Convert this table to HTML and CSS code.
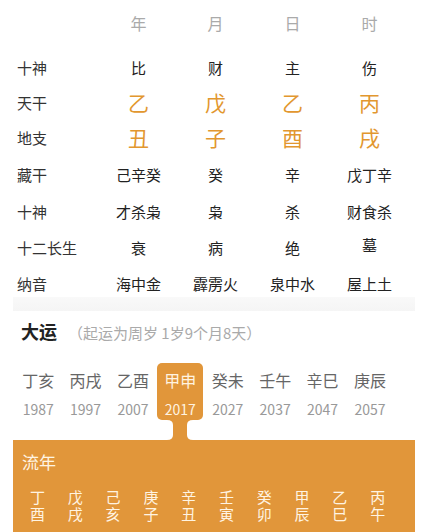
FILE: index.html
```html
<!DOCTYPE html>
<html lang="zh-CN">
<head>
<meta charset="utf-8">
<link rel="stylesheet" href="styles.css">
</head>
<body>
<div class="pillars">
  <div class="row head"><span class="lbl"></span><span>年</span><span>月</span><span>日</span><span>时</span></div>
  <div class="row"><span class="lbl">十神</span><span>比</span><span>财</span><span>主</span><span>伤</span></div>
  <div class="row big gan"><span class="lbl">天干</span><span>乙</span><span>戊</span><span>乙</span><span>丙</span></div>
  <div class="row big zhi"><span class="lbl">地支</span><span>丑</span><span>子</span><span>酉</span><span>戌</span></div>
  <div class="row cang"><span class="lbl">藏干</span><span>己辛癸</span><span>癸</span><span>辛</span><span>戊丁辛</span></div>
  <div class="row"><span class="lbl">十神</span><span>才杀枭</span><span>枭</span><span>杀</span><span>财食杀</span></div>
  <div class="row"><span class="lbl">十二长生</span><span>衰</span><span>病</span><span>绝</span><span class="up">墓</span></div>
  <div class="row last"><span class="lbl">纳音</span><span>海中金</span><span>霹雳火</span><span>泉中水</span><span>屋上土</span></div>
</div>
<div class="band"></div>
<section class="dayun">
  <h2 class="dy-title">大运<span class="dy-sub">（起运为周岁 1岁9个月8天）</span></h2>
  <div class="dy-list">
    <div class="dy-item"><span class="gz">丁亥</span><span class="yr">1987</span></div>
    <div class="dy-item"><span class="gz">丙戌</span><span class="yr">1997</span></div>
    <div class="dy-item"><span class="gz">乙酉</span><span class="yr">2007</span></div>
    <div class="dy-item active"><span class="gz">甲申</span><span class="yr">2017</span>
      <svg class="neck" width="26" height="21" viewBox="0 0 26 21"><path d="M0 0 H26 Q20 0 20 5 V15 Q20 20 26 20 V21 H0 V20 Q6 20 6 15 V5 Q6 0 0 0 Z" fill="#e1963a"/></svg>
    </div>
    <div class="dy-item"><span class="gz">癸未</span><span class="yr">2027</span></div>
    <div class="dy-item"><span class="gz">壬午</span><span class="yr">2037</span></div>
    <div class="dy-item"><span class="gz">辛巳</span><span class="yr">2047</span></div>
    <div class="dy-item"><span class="gz">庚辰</span><span class="yr">2057</span></div>
  </div>
</section>
<section class="liunian">
  <h3 class="ln-title">流年</h3>
  <div class="ln-grid">
    <div class="ln-col">丁<br>酉</div>
    <div class="ln-col">戊<br>戌</div>
    <div class="ln-col">己<br>亥</div>
    <div class="ln-col">庚<br>子</div>
    <div class="ln-col">辛<br>丑</div>
    <div class="ln-col">壬<br>寅</div>
    <div class="ln-col">癸<br>卯</div>
    <div class="ln-col">甲<br>辰</div>
    <div class="ln-col">乙<br>巳</div>
    <div class="ln-col">丙<br>午</div>
  </div>
</section>
</body>
</html>
```
FILE: styles.css
```css
* { box-sizing: border-box; }
html, body { margin: 0; padding: 0; background: #fff; }
body {
  width: 423px;
  height: 532px;
  overflow: hidden;
  font-family: "Noto Sans CJK SC", "Noto Sans", sans-serif;
  color: #222;
}
.pillars { padding-left: 17px; }
.row {
  display: grid;
  grid-template-columns: 83px 77px 77px 77px 77px;
  height: 36px;
  align-items: center;
  font-size: 15px;
  line-height: 36px;
}
.row span { text-align: center; white-space: nowrap; }
.row .lbl { text-align: left; color: #333; }
.row.head { height: 46px; line-height: 46px; font-size: 16px; color: #aaa; margin-bottom: 4px; }
.row.big span:not(.lbl) { font-size: 21px; color: #e2972f; }
.row.gan { height: 33px; line-height: 33px; }
.row.zhi { height: 37px; line-height: 37px; }
.row.cang { height: 38px; line-height: 38px; }
.row.last { height: 31px; align-items: start; }
.row .up { position: relative; top: -3px; }
.band {
  margin-left: 13px;
  margin-right: 8px;
  height: 14px;
  background: linear-gradient(#f9f9f9, #f5f5f5);
}
.dayun { padding-top: 8px; }
.dy-title {
  margin: 0;
  padding-left: 21px;
  font-size: 18px;
  line-height: 24px;
  font-weight: 700;
  color: #222;
}
.dy-sub {
  font-size: 15px;
  font-weight: 400;
  color: #aaa;
  margin-left: 11px;
}
.dy-list {
  display: grid;
  grid-template-columns: repeat(8, 47.4px);
  padding-left: 14.5px;
  margin-top: 18px;
  margin-bottom: 20px;
}
.dy-item {
  display: flex;
  flex-direction: column;
  align-items: center;
  padding-top: 7px;
  height: 57px;
  position: relative;
  border-radius: 5px;
}
.dy-item .gz { font-size: 16px; line-height: 20px; color: #666; }
.dy-item .yr { font-size: 14px; line-height: 18px; margin-top: 10px; color: #999; }
.dy-item.active { background: #e1963a; width: 46px; margin-left: 0.5px; }
.dy-item.active .gz, .dy-item.active .yr { color: #fff3e0; }
.neck {
  position: absolute;
  top: 100%;
  left: 50%;
  margin-left: -13px;
  display: block;
}
.liunian {
  background: #e1963a;
  margin-left: 13px;
  margin-right: 8px;
  height: 94px;
  padding-top: 10px;
  color: #fff4e2;
}
.ln-title {
  margin: 0;
  padding-left: 9px;
  font-size: 17px;
  line-height: 24px;
  font-weight: 400;
}
.ln-grid {
  display: grid;
  grid-template-columns: repeat(10, 37.8px);
  padding-left: 5.6px;
  margin-top: 14px;
}
.ln-col {
  text-align: center;
  font-size: 15px;
  line-height: 17px;
}
```
